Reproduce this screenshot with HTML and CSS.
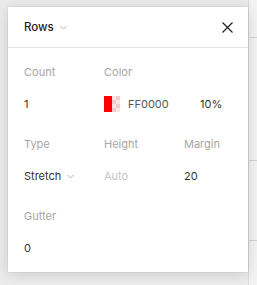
FILE: index.html
```html
<!DOCTYPE html>
<html>
<head>
<meta charset="utf-8">
<link rel="stylesheet" href="styles.css">
</head>
<body>
<div class="stage">
  <div class="backdrop">
    <div class="side">
      <div class="side-row r1"></div>
      <div class="side-row r2"></div>
      <div class="side-row r3"></div>
    </div>
  </div>
  <div class="panel">
    <div class="header">
      <div class="title">Rows
        <svg class="chev" width="7" height="5" viewBox="0 0 7 5"><path d="M0.5 1 L3.5 4 L6.5 1" fill="none" stroke="#b3b3b3" stroke-width="1"/></svg>
      </div>
      <svg class="close" width="11" height="11" viewBox="0 0 11 11"><path d="M0.5 0.5 L10.5 10.5 M10.5 0.5 L0.5 10.5" stroke="#1a1a1a" stroke-width="1.1" fill="none"/></svg>
    </div>
    <div class="body">
      <div class="group">
        <div class="label">Count</div>
        <div class="label">Color</div>
        <div class="label"></div>
        <div class="value">1</div>
        <div class="value color-cell"><span class="swatch"><span class="red"></span><span class="checker"></span></span><span class="hex">FF0000</span></div>
        <div class="value pct">10%</div>
      </div>
      <div class="group">
        <div class="label">Type</div>
        <div class="label">Height</div>
        <div class="label">Margin</div>
        <div class="value">Stretch <svg class="chev" width="7" height="5" viewBox="0 0 7 5"><path d="M0.5 1 L3.5 4 L6.5 1" fill="none" stroke="#b3b3b3" stroke-width="1"/></svg></div>
        <div class="value muted">Auto</div>
        <div class="value">20</div>
      </div>
      <div class="group">
        <div class="label">Gutter</div>
        <div class="label"></div>
        <div class="label"></div>
        <div class="value">0</div>
      </div>
    </div>
  </div>
</div>
</body>
</html>
```
FILE: styles.css
```css
* { box-sizing: border-box; }
html, body { margin: 0; padding: 0; }
body {
  width: 257px;
  height: 285px;
  overflow: hidden;
  background: #ececec;
  font-family: Inter, "Noto Sans", sans-serif;
  font-size: 11px;
  color: #333;
}
.stage {
  position: relative;
  width: 257px;
  height: 285px;
}
.backdrop {
  position: absolute;
  inset: 0;
  display: flex;
  justify-content: flex-end;
}
.side {
  width: 9px;
  height: 100%;
  background: #f4f4f4;
  border-left: 1px solid #dcdcdc;
  display: flex;
  flex-direction: column;
}
.side-row { border-bottom: 1px solid #d6d6d6; }
.r1 { height: 38px; }
.r2 { height: 123px; }
.r3 { height: 80px; }
.panel {
  position: absolute;
  left: 8px;
  top: 7px;
  width: 240px;
  height: 265px;
  background: #fff;
  box-shadow: 0 2px 14px rgba(0,0,0,0.15), 0 0 0 0.5px rgba(0,0,0,0.08);
  display: flex;
  flex-direction: column;
}
.header {
  height: 41px;
  border-bottom: 1px solid #e6e6e6;
  display: flex;
  align-items: center;
  justify-content: space-between;
  padding: 0 15px 0 16px;
}
.title {
  font-weight: 500;
  font-size: 11.5px;
  color: #222;
  display: flex;
  align-items: center;
  gap: 6px;
}
.chev { display: inline-block; }
.close { display: block; }
.body {
  padding: 8px 16px 8px 16px;
  display: flex;
  flex-direction: column;
  gap: 8px;
}
.group {
  display: grid;
  grid-template-columns: 80px 80px 64px;
  grid-auto-rows: 32px;
}
.label {
  color: #a6a6a6;
  display: flex;
  align-items: center;
}
.value {
  color: #333;
  display: flex;
  align-items: center;
  gap: 6px;
}
.value.muted { color: #c4c4c4; }
.color-cell { gap: 8px; }
.hex { color: #555; }
.pct { padding-left: 16px; }
.swatch {
  display: flex;
  width: 16px;
  height: 16px;
}
.red { width: 8px; height: 16px; background: #ff0000; }
.checker {
  width: 8px;
  height: 16px;
  background-image:
    linear-gradient(45deg, #f3cccc 25%, transparent 25%, transparent 75%, #f3cccc 75%),
    linear-gradient(45deg, #f3cccc 25%, transparent 25%, transparent 75%, #f3cccc 75%);
  background-size: 8px 8px;
  background-position: 0 0, 4px 4px;
  background-color: #fbe6e6;
}
```
